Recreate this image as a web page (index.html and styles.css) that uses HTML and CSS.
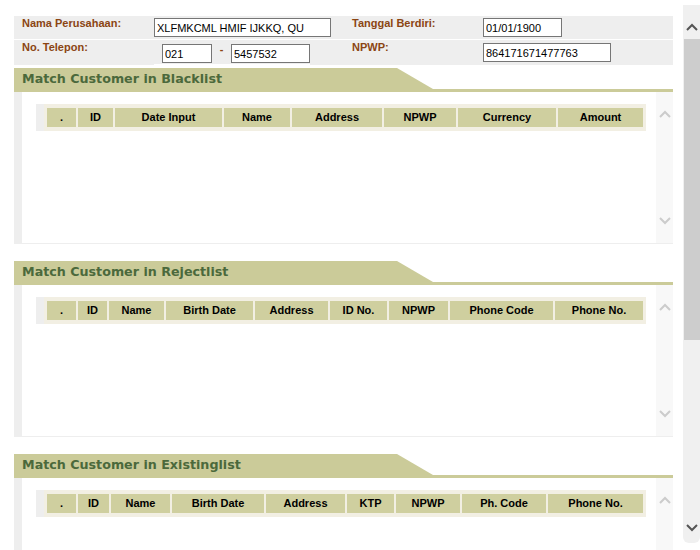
FILE: index.html
```html
<!DOCTYPE html>
<html>
<head>
<meta charset="utf-8">
<title>Match Customer</title>
<link rel="stylesheet" href="styles.css">
</head>
<body>
<div class="app">
  <div class="main">
    <div class="form">
      <div class="cell lbl">Nama Perusahaan:</div>
      <div class="cell r1"><input class="in in-name" value="XLFMKCML HMIF IJKKQ, QU"></div>
      <div class="cell lbl lbl2">Tanggal Berdiri:</div>
      <div class="cell r1"><input class="in in-date" value="01/01/1900"></div>
      <div class="cell lbl">No. Telepon:</div>
      <div class="cell"><div class="phone"><input class="in in-area" value="021"><span class="dash">-</span><input class="in in-num" value="5457532"></div></div>
      <div class="cell lbl lbl2">NPWP:</div>
      <div class="cell r2"><input class="in in-npwp" value="864171671477763"></div>
    </div>

    <section class="sec sec-first">
      <div class="sec-head"><div class="tab">Match Customer in Blacklist</div></div>
      <div class="panel">
        <div class="panel-body">
          <div class="grid-wrap">
            <table class="grid grid-black">
              <tr><th>.</th><th>ID</th><th>Date Input</th><th>Name</th><th>Address</th><th>NPWP</th><th>Currency</th><th>Amount</th></tr>
            </table>
          </div>
        </div>
        <div class="pscroll">
          <svg width="12" height="8" viewBox="0 0 12 8"><polyline points="1,7 6,2 11,7" fill="none" stroke="#cccccc" stroke-width="2"/></svg>
          <svg width="12" height="8" viewBox="0 0 12 8"><polyline points="1,1 6,6 11,1" fill="none" stroke="#cccccc" stroke-width="2"/></svg>
        </div>
      </div>
    </section>

    <section class="sec">
      <div class="sec-head"><div class="tab">Match Customer in Rejectlist</div></div>
      <div class="panel">
        <div class="panel-body">
          <div class="grid-wrap">
            <table class="grid grid-reject">
              <tr><th>.</th><th>ID</th><th>Name</th><th>Birth Date</th><th>Address</th><th>ID No.</th><th>NPWP</th><th>Phone Code</th><th>Phone No.</th></tr>
            </table>
          </div>
        </div>
        <div class="pscroll">
          <svg width="12" height="8" viewBox="0 0 12 8"><polyline points="1,7 6,2 11,7" fill="none" stroke="#cccccc" stroke-width="2"/></svg>
          <svg width="12" height="8" viewBox="0 0 12 8"><polyline points="1,1 6,6 11,1" fill="none" stroke="#cccccc" stroke-width="2"/></svg>
        </div>
      </div>
    </section>

    <section class="sec">
      <div class="sec-head"><div class="tab">Match Customer in Existinglist</div></div>
      <div class="panel">
        <div class="panel-body">
          <div class="grid-wrap">
            <table class="grid grid-exist">
              <tr><th>.</th><th>ID</th><th>Name</th><th>Birth Date</th><th>Address</th><th>KTP</th><th>NPWP</th><th>Ph. Code</th><th>Phone No.</th></tr>
            </table>
          </div>
        </div>
        <div class="pscroll">
          <svg width="12" height="8" viewBox="0 0 12 8"><polyline points="1,7 6,2 11,7" fill="none" stroke="#cccccc" stroke-width="2"/></svg>
          <svg width="12" height="8" viewBox="0 0 12 8"><polyline points="1,1 6,6 11,1" fill="none" stroke="#cccccc" stroke-width="2"/></svg>
        </div>
      </div>
    </section>
  </div>

  <div class="vscroll">
    <div class="vs-up">
      <svg width="12" height="8" viewBox="0 0 12 8"><polyline points="1,7 6,2 11,7" fill="none" stroke="#555555" stroke-width="2"/></svg>
    </div>
    <div class="vs-thumb"></div>
    <div class="vs-space"></div>
    <div class="vs-down">
      <svg width="12" height="8" viewBox="0 0 12 8"><polyline points="1,1 6,6 11,1" fill="none" stroke="#555555" stroke-width="2"/></svg>
    </div>
  </div>
</div>
</body>
</html>
```

FILE: styles.css
```css
html, body {
  margin: 0;
  padding: 0;
  background: #ffffff;
}

body {
  font-family: "Liberation Sans", Arial, sans-serif;
  font-size: 11px;
  color: #000;
}

.app {
  display: flex;
  width: 700px;
  height: 550px;
  overflow: hidden;
}

.main {
  width: 683px;
  height: 550px;
  overflow: hidden;
  box-sizing: border-box;
  padding: 16px 10px 0 14px;
}

/* ---------- form ---------- */
.form {
  display: grid;
  grid-template-columns: 140px 190px 139px 190px;
  grid-template-rows: 23px 25px;
  row-gap: 1px;
  background: #ffffff;
}

.cell {
  background: #eeeeee;
}

.lbl {
  color: #8b4513;
  font-weight: bold;
  font-size: 11px;
  line-height: 13px;
  padding: 1px 0 0 8px;
}

.r1 {
  padding-top: 2px;
}

.r2 {
  padding-top: 3px;
}

.in {
  display: block;
  box-sizing: border-box;
  height: 19px;
  margin: 0;
  padding: 0 2px;
  border: 1px solid #767676;
  background: #fff;
  font-family: "Liberation Sans", Arial, sans-serif;
  font-size: 11px;
  color: #000;
  outline: none;
}

.in-name { width: 177px; }
.in-date { width: 79px; }
.in-npwp { width: 128px; }
.in-area { width: 50px; }
.in-num  { width: 79px; }

.phone {
  display: flex;
  align-items: flex-start;
  width: 148px;
  margin-top: 4px;
  padding: 0 0 1px 8px;
  border-bottom: 1px solid #ffffff;
}

.dash {
  width: 19px;
  text-align: center;
  color: #8b4513;
  font-weight: bold;
  line-height: 13px;
  margin-top: -1px;
}

/* ---------- sections ---------- */
.sec {
  margin-top: 17px;
}

.sec-first {
  margin-top: 3px;
}

.sec-head {
  height: 21px;
  border-bottom: 3px solid #cbcb99;
}

.tab {
  width: 419px;
  height: 21px;
  background: #cbcb99;
  clip-path: polygon(0 0, 383px 0, 419px 21px, 0 21px);
  box-sizing: border-box;
  padding-left: 8px;
  font-family: "DejaVu Sans", Verdana, sans-serif;
  font-weight: bold;
  font-size: 12.7px;
  line-height: 21px;
  color: #4b693c;
  white-space: nowrap;
}

.panel {
  display: flex;
  height: 151px;
  border-left: 8px solid #eeeeee;
  border-bottom: 1px solid #eeeeee;
}

.panel-body {
  flex: 1;
  background: #ffffff;
  padding: 12px 0 0 14px;
}

.grid-wrap {
  width: fit-content;
  background: #eeeeee;
  padding-left: 8px;
}

.pscroll {
  width: 17px;
  background: #f8f8f8;
  display: flex;
  flex-direction: column;
  justify-content: space-between;
  align-items: center;
  padding: 18px 0;
  box-sizing: border-box;
}

.pscroll svg {
  display: block;
}

/* ---------- grid header tables ---------- */
.grid {
  border-collapse: separate;
  border-spacing: 2px;
  background: #f2efe3;
  padding: 2px 1px;
}

.grid th {
  height: 19px;
  padding: 0;
  background: #cfcf9f;
  font-family: "Liberation Sans", Arial, sans-serif;
  font-weight: bold;
  font-size: 11px;
  line-height: 19px;
  text-align: center;
  white-space: nowrap;
  color: #000;
}

.grid-black th:nth-child(1) { width: 29px; }
.grid-black th:nth-child(2) { width: 35px; }
.grid-black th:nth-child(3) { width: 107px; }
.grid-black th:nth-child(4) { width: 66px; }
.grid-black th:nth-child(5) { width: 90px; }
.grid-black th:nth-child(6) { width: 72px; }
.grid-black th:nth-child(7) { width: 98px; }
.grid-black th:nth-child(8) { width: 85px; }

.grid-reject th:nth-child(1) { width: 29px; }
.grid-reject th:nth-child(2) { width: 29px; }
.grid-reject th:nth-child(3) { width: 55px; }
.grid-reject th:nth-child(4) { width: 87px; }
.grid-reject th:nth-child(5) { width: 73px; }
.grid-reject th:nth-child(6) { width: 57px; }
.grid-reject th:nth-child(7) { width: 59px; }
.grid-reject th:nth-child(8) { width: 103px; }
.grid-reject th:nth-child(9) { width: 88px; }

.grid-exist th:nth-child(1) { width: 29px; }
.grid-exist th:nth-child(2) { width: 31px; }
.grid-exist th:nth-child(3) { width: 59px; }
.grid-exist th:nth-child(4) { width: 92px; }
.grid-exist th:nth-child(5) { width: 79px; }
.grid-exist th:nth-child(6) { width: 47px; }
.grid-exist th:nth-child(7) { width: 64px; }
.grid-exist th:nth-child(8) { width: 84px; }
.grid-exist th:nth-child(9) { width: 95px; }

/* ---------- page scrollbar ---------- */
.vscroll {
  width: 17px;
  height: 538px;
  margin-top: 5px;
  background: #f0f0f0;
  display: flex;
  flex-direction: column;
  border-radius: 0 0 6px 6px;
}

.vs-up {
  height: 34px;
  box-sizing: border-box;
  padding-top: 18px;
  display: flex;
  justify-content: center;
}

.vs-up svg, .vs-down svg {
  display: block;
}

.vs-thumb {
  width: 16px;
  height: 301px;
  margin-left: 1px;
  background: #cdcdcd;
}

.vs-space {
  flex: 1;
}

.vs-down {
  height: 19px;
  display: flex;
  justify-content: center;
  align-items: flex-start;
}
```
